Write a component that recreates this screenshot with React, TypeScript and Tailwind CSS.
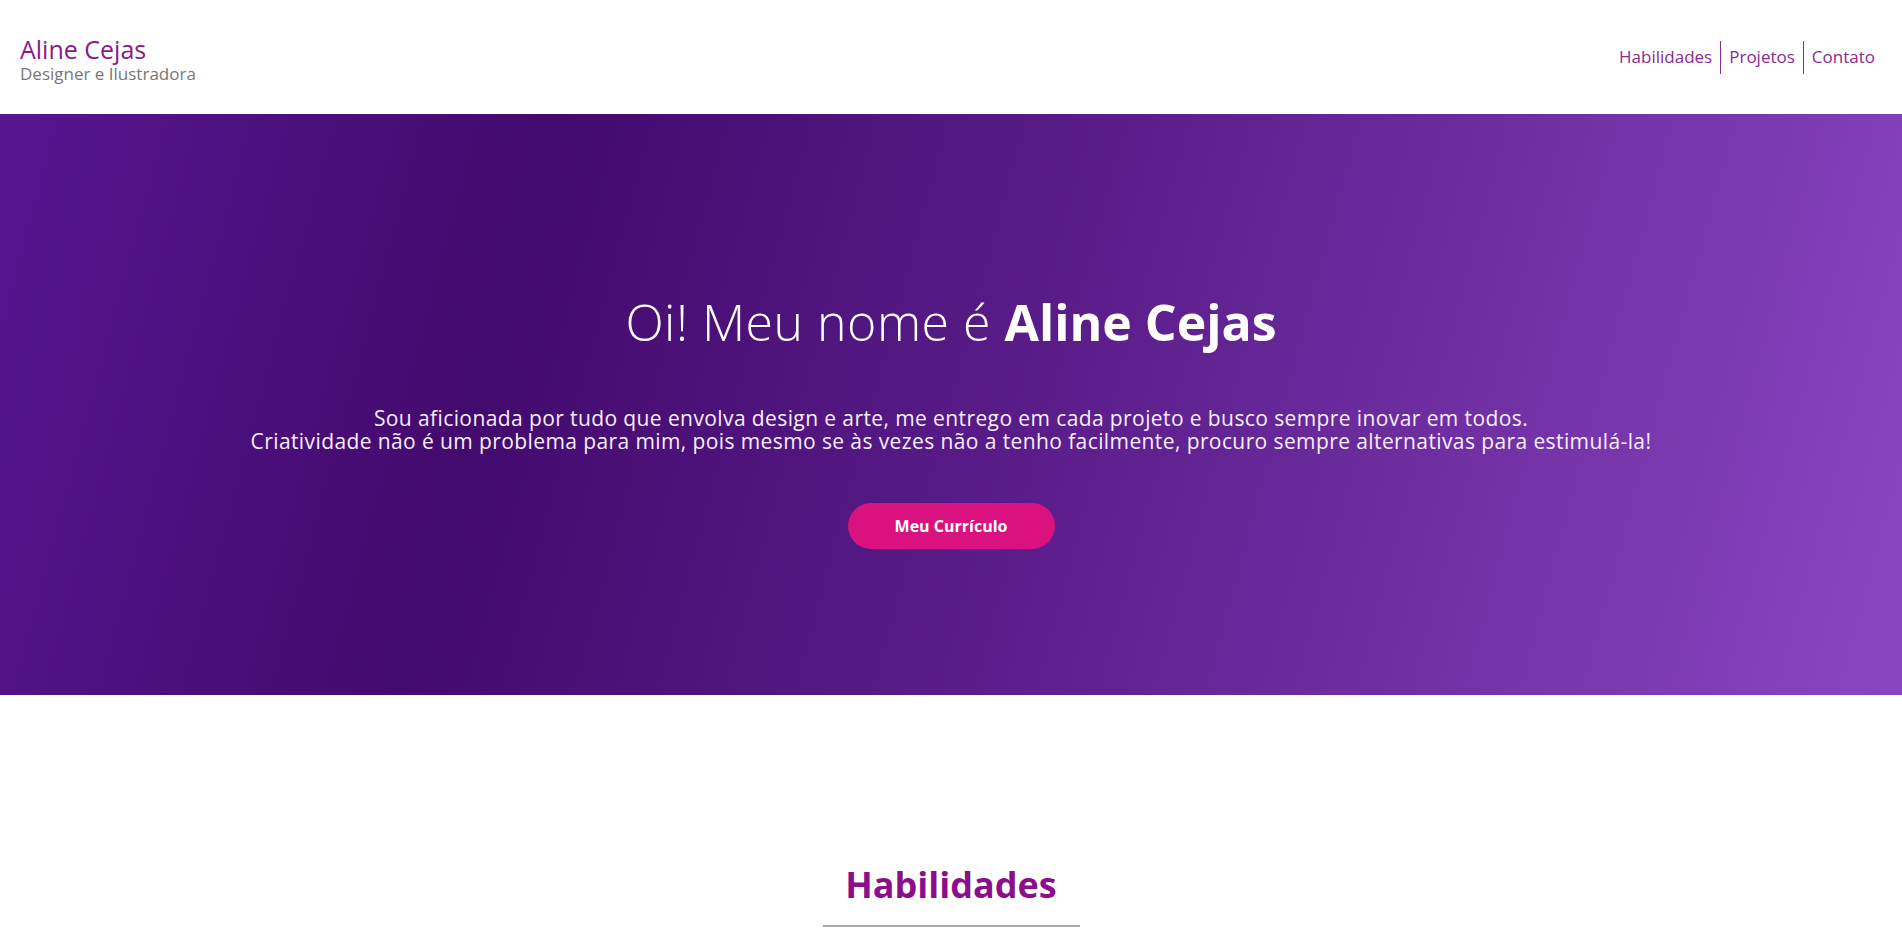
const sans = "font-['Open_Sans','Noto_Sans',sans-serif]"

function NavLink({ label, first }: { label: string; first?: boolean }) {
  return (
    <a
      href="#"
      className={`flex items-center h-[33px] px-[8px] text-[17px] text-[#8b2a8f] ${first ? "" : "border-l border-[#8b2a8f]"}`}
    >
      {label}
    </a>
  )
}

export default function App() {
  return (
    <div className={`min-h-screen bg-white ${sans}`}>
      <header className="h-[114px] flex items-center justify-between pl-5 pr-[19px]">
        <div className="flex flex-col mt-[3px]">
          <span className="text-[25px] text-[#8a1a8a] leading-[30px]">Aline Cejas</span>
          <span className="text-[17px] text-[#777777] leading-[20px]">Designer e Ilustradora</span>
        </div>
        <nav className="flex items-center">
          <NavLink label="Habilidades" first />
          <NavLink label="Projetos" />
          <NavLink label="Contato" />
        </nav>
      </header>

      <section className="h-[581px] flex flex-col items-center pt-[180px] text-white bg-[linear-gradient(105deg,#56168f_0%,#430a6d_27%,#5a1d8a_55%,#8a46c1_100%)]">
        <h1 className="text-[50px] leading-[56px] font-light tracking-[0.5px]">
          Oi! Meu nome é <span className="font-bold tracking-normal">Aline Cejas</span>
        </h1>
        <p className="mt-[57px] text-[21px] leading-[23px] tracking-[0.4px] text-center text-[#f6eefc]">
          Sou aficionada por tudo que envolva design e arte, me entrego em cada projeto e busco sempre inovar em todos.
          <br />
          Criatividade não é um problema para mim, pois mesmo se às vezes não a tenho facilmente, procuro sempre alternativas para estimulá-la!
        </p>
        <button className="mt-[50px] w-[207px] h-[46px] rounded-full bg-[#d9127f] text-white text-[16px] font-bold">
          Meu Currículo
        </button>
      </section>

      <section className="flex flex-col items-center pt-[168px]">
        <h2 className="text-[36px] font-bold text-[#8b0f8b] leading-[44px]">Habilidades</h2>
        <div className="mt-[18px] w-[257px] h-[2px] bg-[#aaaaaa]" />
      </section>
    </div>
  )
}
